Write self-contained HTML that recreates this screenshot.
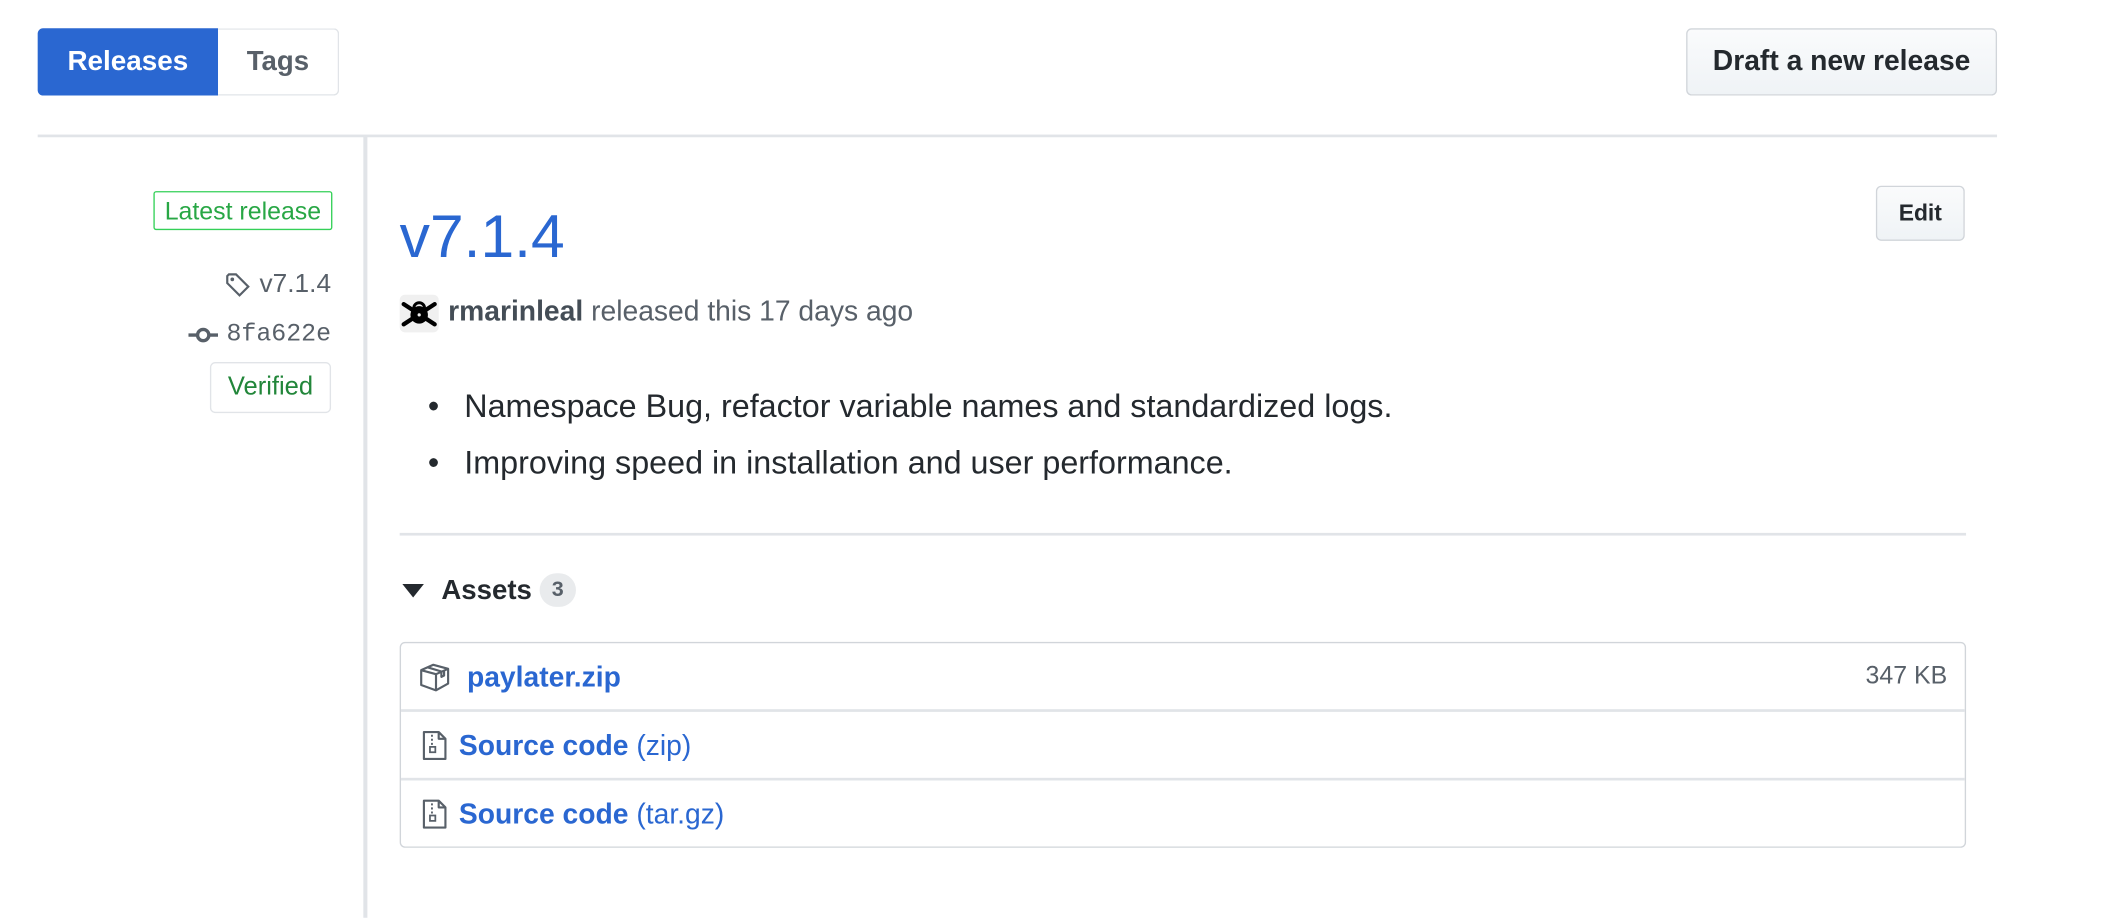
<!DOCTYPE html>
<html><head><meta charset="utf-8"><style>
html,body{margin:0;padding:0;background:#fff;width:2110px;height:918px;overflow:hidden}
#w{position:absolute;left:0;top:0;width:1568px;height:682px;transform:scale(1.3457);transform-origin:0 0;font-family:"Liberation Sans",sans-serif}
.a{position:absolute;white-space:nowrap}
.btn{position:absolute;box-sizing:border-box;border:1px solid #d1d5da;border-radius:4px;background:linear-gradient(#fafbfc,#eff3f6);display:flex;align-items:center;justify-content:center;font-weight:bold;color:#24292e}
.blue{color:#2a67d1}
</style></head><body><div id="w">
<div class="a" style="left:28px;top:21px;width:134px;height:50px;background:#2a67d1;border-radius:4px 0 0 4px;color:#fff;font-weight:bold;font-size:20.7px;display:flex;align-items:center;justify-content:center">Releases</div>
<div class="a" style="left:162px;top:21px;width:90px;height:50px;box-sizing:border-box;border:1px solid #e1e4e8;border-left:none;border-radius:0 4px 4px 0;color:#586069;font-weight:bold;font-size:20.5px;display:flex;align-items:center;justify-content:center">Tags</div>
<div class="btn" style="left:1253px;top:21px;width:231px;height:50px;font-size:21px">Draft a new release</div>
<div class="a" style="left:28px;top:100px;width:1456px;height:2px;background:#e1e4e8"></div>
<div class="a" style="left:270px;top:101px;width:3px;height:581px;background:#e1e4e8"></div>

<div class="a" style="left:114px;top:142px;width:133px;height:29px;box-sizing:border-box;border:1px solid #34d058;border-radius:2px;color:#28a745;font-size:18.5px;display:flex;align-items:center;justify-content:center">Latest release</div>
<div class="a" style="right:1322px;top:200px;font-size:19.5px;color:#586069;display:flex;align-items:center"><svg width="20" height="22" viewBox="0 0 16 16" style="margin-right:6px"><path d="M1.5 2.5v4.2l7.3 7.3 5.2-5.2-7.3-7.3H2.5z" fill="none" stroke="#586069" stroke-width="1.3"/><circle cx="4.5" cy="4.5" r="1.1" fill="#586069"/></svg>v7.1.4</div>
<div class="a" style="right:1322px;top:238px;font-size:18.5px;color:#586069;font-family:'Liberation Mono',monospace;display:flex;align-items:center"><svg width="22" height="14" viewBox="0 0 22 14" style="margin-right:6px"><line x1="0" y1="7" x2="22" y2="7" stroke="#586069" stroke-width="2.5"/><circle cx="11" cy="7" r="4.2" fill="#fff" stroke="#586069" stroke-width="2.5"/></svg>8fa622e</div>
<div class="a" style="left:156px;top:269px;width:90px;height:38px;box-sizing:border-box;border:1px solid #e1e4e8;border-radius:4px;color:#22863a;font-size:19px;display:flex;align-items:center;justify-content:center">Verified</div>

<div class="a blue" style="left:297px;top:148px;font-size:45px;line-height:56px">v7.1.4</div>
<div class="btn" style="left:1394px;top:138px;width:66px;height:41px;font-size:17px">Edit</div>
<div class="a" style="left:297px;top:219px;width:29px;height:28px;background:#f0f0f0;border-radius:4px"><svg width="29" height="28" viewBox="0 0 29 28"><g stroke="#000" stroke-width="3.2" stroke-linecap="round"><line x1="3" y1="7" x2="26" y2="22"/><line x1="26" y1="7" x2="3" y2="22"/></g><circle cx="14.5" cy="15" r="6.5" fill="#000"/><path d="M10.5 10a4 4 0 0 1 8 0" fill="none" stroke="#000" stroke-width="2.2"/><circle cx="14.5" cy="15" r="1.2" fill="#f0f0f0"/></svg></div>
<div class="a" style="left:333px;top:220px;font-size:21px;color:#586069"><b style="color:#444d56">rmarinleal</b> released this 17 days ago</div>

<div class="a" style="left:318px;top:289px;font-size:24px;color:#24292e">•</div>
<div class="a" style="left:345px;top:289px;font-size:24px;color:#24292e">Namespace Bug, refactor variable names and standardized logs.</div>
<div class="a" style="left:318px;top:331px;font-size:24px;color:#24292e">•</div>
<div class="a" style="left:345px;top:331px;font-size:24px;color:#24292e">Improving speed in installation and user performance.</div>
<div class="a" style="left:297px;top:396px;width:1164px;height:2px;background:#e1e4e8"></div>

<div class="a" style="left:299px;top:434px;width:0;height:0;border-left:8px solid transparent;border-right:8px solid transparent;border-top:10px solid #24292e"></div>
<div class="a" style="left:328px;top:427px;font-size:20.5px;font-weight:bold;color:#24292e">Assets</div>
<div class="a" style="left:401px;top:426px;width:27px;height:25px;border-radius:13px;background:#e9ebed;color:#586069;font-size:16px;font-weight:bold;display:flex;align-items:center;justify-content:center">3</div>

<div class="a" style="left:297px;top:477px;width:1164px;height:153px;box-sizing:border-box;border:1px solid #d1d5da;border-radius:4px"></div>
<div class="a" style="left:298px;top:527px;width:1162px;height:2px;background:#e1e4e8"></div>
<div class="a" style="left:298px;top:578px;width:1162px;height:2px;background:#e1e4e8"></div>

<svg class="a" style="left:311px;top:492px" width="24" height="22" viewBox="0 0 24 22"><path d="M2 6l9-4 11 3v11l-9 5-11-4z M2 6l11 3 9-4 M13 9v12 M7 4l10 3v4l2-1V6" fill="none" stroke="#586069" stroke-width="1.6" stroke-linejoin="round"/></svg>
<div class="a blue" style="left:347px;top:492px;font-size:21px;font-weight:bold">paylater.zip</div>
<div class="a" style="right:121px;top:491px;font-size:18.5px;color:#586069">347 KB</div>

<svg class="a" style="left:314px;top:543px" width="18" height="22" viewBox="0 0 18 22"><path d="M1 1h11l5 5v15H1z M12 1v5h5" fill="none" stroke="#586069" stroke-width="1.6" stroke-linejoin="round"/><path d="M7 3v8" stroke="#586069" stroke-width="1.4" stroke-dasharray="1.5 1.5"/><rect x="5.5" y="12" width="4" height="4" fill="none" stroke="#586069" stroke-width="1.3"/></svg>
<div class="a blue" style="left:341px;top:543px;font-size:21px"><b>Source code</b> (zip)</div>

<svg class="a" style="left:314px;top:594px" width="18" height="22" viewBox="0 0 18 22"><path d="M1 1h11l5 5v15H1z M12 1v5h5" fill="none" stroke="#586069" stroke-width="1.6" stroke-linejoin="round"/><path d="M7 3v8" stroke="#586069" stroke-width="1.4" stroke-dasharray="1.5 1.5"/><rect x="5.5" y="12" width="4" height="4" fill="none" stroke="#586069" stroke-width="1.3"/></svg>
<div class="a blue" style="left:341px;top:594px;font-size:21px"><b>Source code</b> (tar.gz)</div>
</div></body></html>
